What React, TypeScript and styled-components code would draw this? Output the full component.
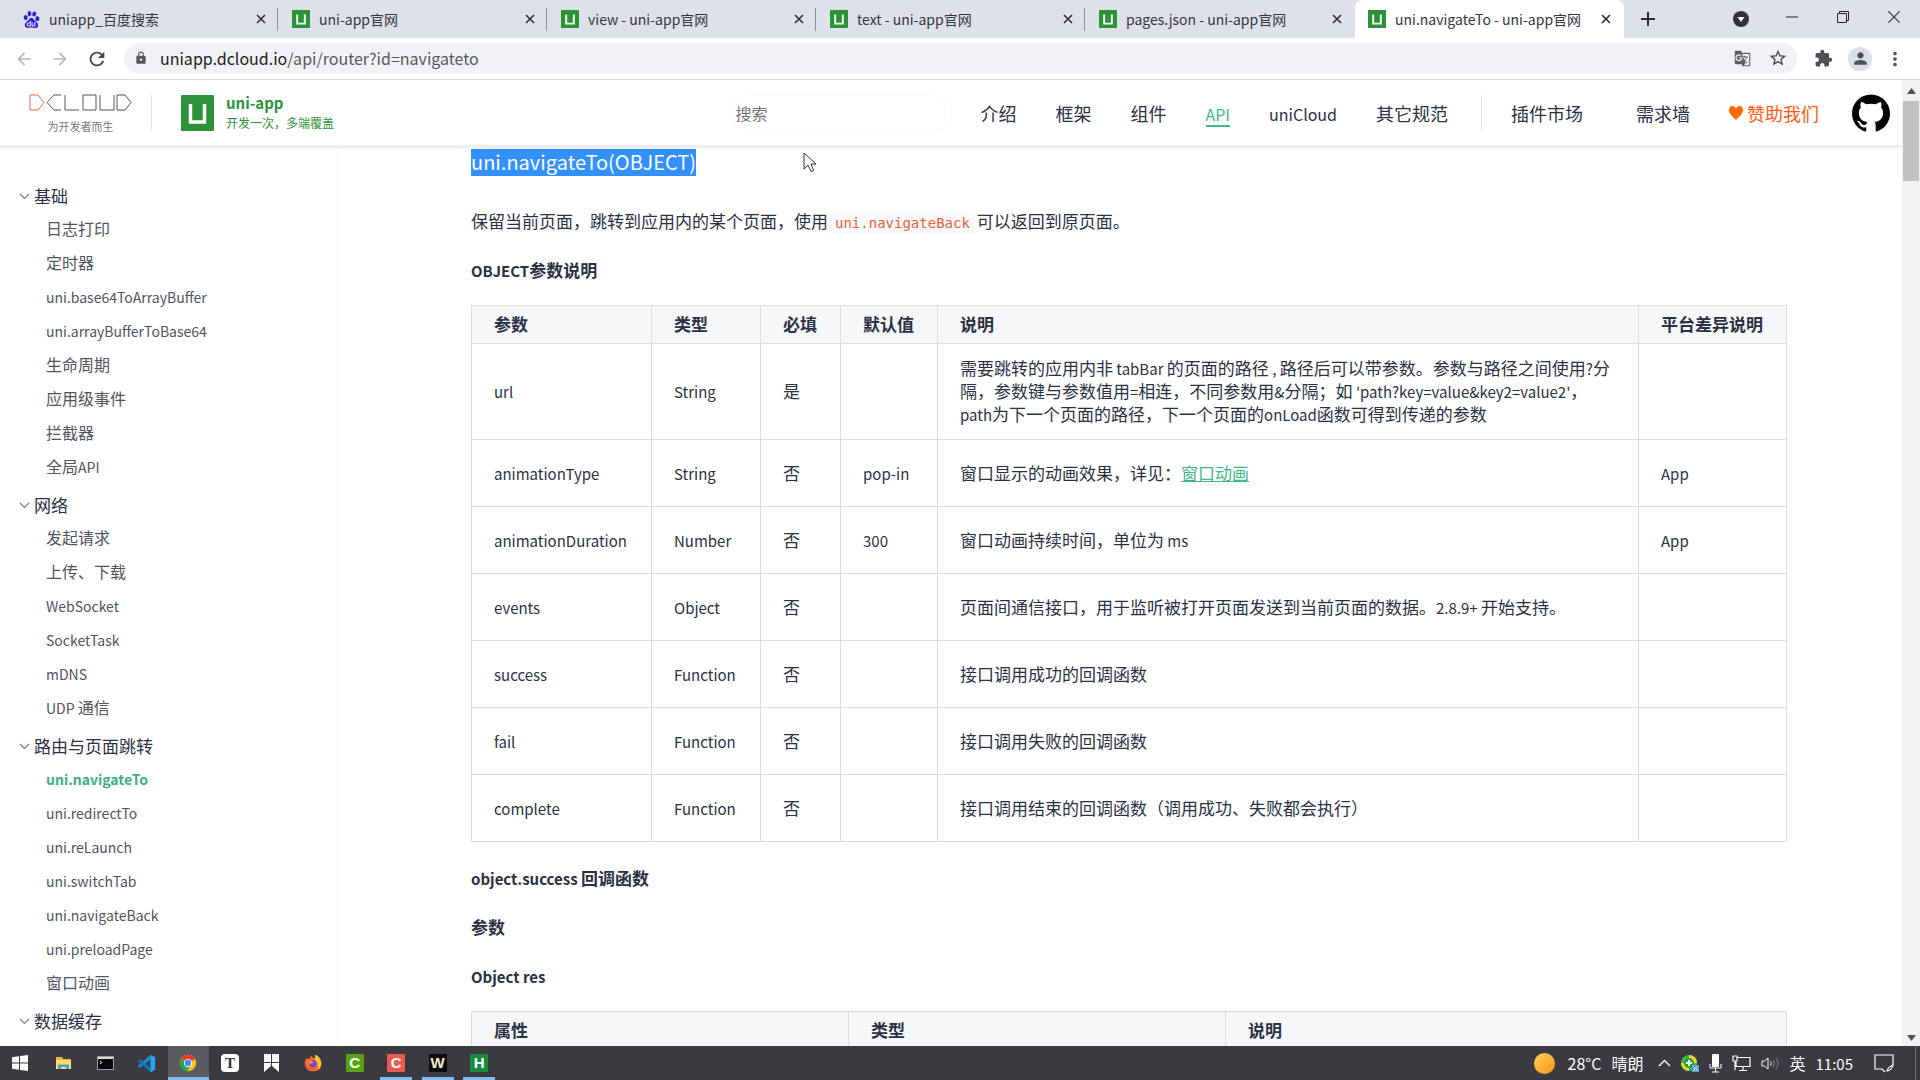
import React from "react";
import styled, { createGlobalStyle, css } from "styled-components";
import {
  MdArrowBack,
  MdArrowForward,
  MdExtension,
  MdGTranslate,
  MdLock,
  MdPerson,
  MdRefresh,
  MdStarBorder,
  MdMoreVert,
} from "react-icons/md";
import { SiBaidu } from "react-icons/si";

const ink = "#2a3145";
const green = "#42b983";
const brand = "#2b9237";
const line = "#dcdcde";
const sans = `"Noto Sans CJK SC", "Noto Sans", sans-serif`;

const Global = createGlobalStyle`
  *, *::before, *::after { box-sizing: border-box; }
  body { margin: 0; font-family: ${sans}; color: ${ink}; background: #fff; }
  button, input { font: inherit; color: inherit; border: 0; padding: 0; background: none; }
  a { color: inherit; text-decoration: none; }
  ul { list-style: none; margin: 0; padding: 0; }
  h2, h4, p { margin: 0; }
  svg { display: block; flex: none; }
`;

const Screen = styled.div`
  height: 100vh;
  display: flex;
  flex-direction: column;
  overflow: hidden;
`;

/* Latin runs are set a little smaller than the Chinese text around them. */
const Latin = styled.span<{ $size: number }>`
  font-size: ${(p) => p.$size}px;
  line-height: 1;
`;

const Mixed = ({ text, size = 15 }: { text: string; size?: number }) => (
  <>
    {text.split(/([ -~]+)/).map((run, i) => (i % 2 ? <Latin key={i} $size={size}>{run}</Latin> : run))}
  </>
);

/* ---------- browser chrome ---------- */

const TabStrip = styled.div`
  flex: none;
  height: 38px;
  padding-left: 10px;
  display: flex;
  background: #dee1e9;
`;

const TabItem = styled.div<{ $active?: boolean; $divided?: boolean }>`
  width: 269px;
  height: 38px;
  padding: 0 12px 0 13px;
  display: flex;
  align-items: center;
  gap: 9px;
  font-size: 14px;
  color: #33363c;
  border-right: 1px solid transparent;
  ${(p) =>
    p.$active &&
    css`
      background: #fff;
      border-radius: 8px 8px 0 0;
    `}
  ${(p) =>
    p.$divided &&
    css`
      background: linear-gradient(#8d9097, #8d9097) right center / 1px 23px no-repeat;
    `}
`;

const TabTitle = styled.span`
  flex: 1;
  min-width: 0;
  overflow: hidden;
  white-space: nowrap;
`;

const IconButton = styled.button<{ $w: number; $tone?: string }>`
  width: ${(p) => p.$w}px;
  align-self: stretch;
  display: flex;
  flex: none;
  align-items: center;
  justify-content: center;
  color: ${(p) => p.$tone || "#2b2d33"};
`;

const Spacer = styled.div`
  flex: 1;
`;

const WindowButtons = styled.div`
  display: flex;
  height: 34px;
`;

const AddressRow = styled.div`
  flex: none;
  height: 42px;
  padding: 0 9px 0 6px;
  display: flex;
  align-items: center;
  background: #fff;
  border-bottom: 1px solid #d7d9de;
`;

const AddressBar = styled.div`
  flex: 1;
  height: 31px;
  margin: 0 8px 0 9px;
  padding: 0 7px 1px 10px;
  display: flex;
  align-items: center;
  gap: 12px;
  border-radius: 16px;
  background: #f1f2f5;
  color: #55585e;
  font-size: 16px;
  white-space: nowrap;
`;

const Url = styled.span`
  flex: 1;
  b {
    font-weight: 400;
    color: #1c1d20;
  }
`;

const Avatar = styled.span`
  width: 24px;
  height: 24px;
  border-radius: 50%;
  display: grid;
  place-items: center;
  background: #dcdeeb;
`;

/* ---------- page header ---------- */

const Viewport = styled.div`
  flex: 1;
  min-height: 0;
  display: flex;
  position: relative;
`;

const Page = styled.div`
  flex: 1;
  min-width: 0;
  display: flex;
  flex-direction: column;
`;

const Header = styled.header`
  flex: none;
  height: 65px;
  padding: 0 12px 0 29px;
  display: flex;
  align-items: center;
  background: #fff;
  font-size: 18px;
  white-space: nowrap;
`;

const HeaderShade = styled.div`
  flex: none;
  height: 4px;
  background: linear-gradient(#ececee, #f3f3f4);
`;

const Company = styled.a`
  display: flex;
  flex-direction: column;
  align-items: center;
  gap: 7px;
  padding-top: 2px;
  font-size: 11px;
  line-height: 16px;
  color: #777;
`;

const Rule = styled.span<{ $before: number; $after: number }>`
  width: 1px;
  height: 36px;
  margin: 0 ${(p) => p.$after}px 0 ${(p) => p.$before}px;
  background: #e4e4e6;
`;

const Product = styled.a`
  display: flex;
  align-items: center;
  gap: 12px;
  color: ${brand};
`;

const ProductText = styled.span`
  display: flex;
  flex-direction: column;
  padding-bottom: 1px;
  font-size: 12px;
  line-height: 19px;
  b {
    font-size: 15px;
    line-height: 21px;
  }
`;

const SearchBox = styled.input`
  width: 222px;
  height: 35px;
  margin-right: 29px;
  padding: 0 5px;
  border: 1px solid #fafafa;
  border-radius: 18px;
  font-size: 16px;
  &::placeholder {
    color: #757575;
    opacity: 1;
  }
`;

const TopNav = styled.nav`
  display: flex;
  align-items: center;
`;

const NavLink = styled.a<{ $active?: boolean; $gap?: number }>`
  margin-right: ${(p) => p.$gap ?? 39}px;
  line-height: 24px;
  border-bottom: 2px solid ${(p) => (p.$active ? green : "transparent")};
  border-top: 2px solid transparent;
  color: ${(p) => (p.$active ? green : ink)};
`;

const Sponsor = styled.a`
  display: flex;
  align-items: center;
  gap: 4px;
  margin-right: 33px;
  color: #ff5a10;
`;

/* ---------- body ---------- */

const Body = styled.div`
  flex: 1;
  min-height: 0;
  display: flex;
  overflow: hidden;
`;

const Sidebar = styled.nav`
  flex: none;
  width: 338px;
  padding: 31px 20px 0 19px;
  border-right: 1px solid #f6f6f7;
  color: #50545e;
  font-size: 16px;
`;

const Group = styled.div`
  padding-bottom: 6px;
`;

const GroupTitle = styled.p`
  display: flex;
  align-items: center;
  gap: 4px;
  line-height: 31px;
  font-size: 17px;
  color: ${ink};
`;

const SideLink = styled.a<{ $active?: boolean }>`
  display: block;
  padding-left: 27px;
  line-height: 34px;
  font-weight: ${(p) => (p.$active ? 700 : 400)};
  color: ${(p) => (p.$active ? "#3fae7d" : "inherit")};
`;

const Article = styled.article`
  flex: 1;
  min-width: 0;
  padding: 0 115px 0 133px;
  font-size: 17px;
  line-height: 23px;
`;

const Title = styled.h2`
  display: flex;
  font-size: 20px;
  font-weight: 400;
  line-height: 25px;
  span {
    padding-bottom: 2px;
    background: #3390ff;
    color: #fff;
  }
`;

const Intro = styled.p`
  margin-top: 33px;
`;

const Code = styled.code`
  margin: 0 2px;
  padding: 3px 5px;
  border-radius: 2px;
  background: #f9f9f9;
  color: #e8603c;
  font: 14px "DejaVu Sans Mono", monospace;
`;

const SubTitle = styled.h4<{ $top: number }>`
  margin-top: ${(p) => p.$top}px;
  font-size: 17px;
  font-weight: 700;
  line-height: 23px;
`;

const DataTable = styled.table`
  width: 100%;
  margin-top: 24px;
  table-layout: fixed;
  border-collapse: collapse;
  text-align: left;
  th,
  td {
    border: 1px solid ${line};
    padding: 12px 22px 14px;
  }
  th {
    height: 38px;
    padding: 0 22px 2px;
    background: #f6f7f8;
    white-space: nowrap;
  }
  td {
    height: 67px;
  }
`;

const Column = styled.col<{ $w?: number }>`
  width: ${(p) => (p.$w ? `${p.$w}px` : "auto")};
`;

const TextLink = styled.a`
  color: ${green};
  text-decoration: underline;
`;

const ScrollBar = styled.div`
  flex: none;
  width: 18px;
  display: flex;
  flex-direction: column;
  align-items: center;
  justify-content: space-between;
  padding: 8px 0 5px;
  background: #f1f1f3;
`;

const Thumb = styled.span`
  width: 16px;
  height: 80px;
  margin: 7px 0 auto;
  background: #c1c1c4;
`;

const Pointer = styled.svg`
  position: absolute;
  left: 803px;
  top: 72px;
`;

/* ---------- task bar ---------- */

const TaskBar = styled.div`
  flex: none;
  height: 34px;
  padding: 0 4px 0 0;
  display: flex;
  align-items: center;
  background: #3a3a40;
  color: #fff;
  font-size: 16px;
  white-space: nowrap;
`;

const Apps = styled.div`
  width: 457px;
  margin-left: 3px;
  align-self: stretch;
  display: grid;
  grid-template-columns: repeat(11, 1fr);
`;

const AppButton = styled.button<{ $focused?: boolean; $running?: boolean }>`
  height: 34px;
  display: flex;
  align-items: center;
  justify-content: center;
  background: ${(p) => (p.$focused ? "#5a5b5f" : "none")};
  ${(p) =>
    (p.$running || p.$focused) &&
    css`
      background-image: linear-gradient(#80bdf0, #80bdf0);
      background-repeat: no-repeat;
      background-position: bottom center;
      background-size: ${p.$focused ? "100%" : "32px"} 3px;
    `}
`;

const Badge = styled.span<{ $bg: string; $fg?: string; $serif?: boolean; $round?: number }>`
  width: 18px;
  height: 18px;
  display: grid;
  place-items: center;
  border-radius: ${(p) => p.$round ?? 1}px;
  background: ${(p) => p.$bg};
  color: ${(p) => p.$fg || "#fff"};
  font: bold 15px/18px ${(p) => (p.$serif ? `"Liberation Serif", serif` : `"Liberation Sans", sans-serif`)};
`;

const Tray = styled.div`
  display: flex;
  align-items: center;
  gap: 10px;
`;

const Weather = styled.span`
  display: flex;
  align-items: center;
  gap: 10px;
  margin-right: 4px;
`;

const Sun = styled.span`
  width: 21px;
  height: 21px;
  margin-right: 3px;
  border-radius: 50%;
  background: linear-gradient(135deg, #ffd257, #f7931e);
`;

const Clock = styled.span`
  margin-right: 11px;
  font-size: 15px;
`;

const Edge = styled.span`
  width: 1px;
  height: 34px;
  margin-left: 11px;
  background: #6c6c70;
`;

/* ---------- drawings ---------- */

const UniLogo = ({ w, h }: { w: number; h: number }) => (
  <svg width={w} height={h} viewBox="0 0 33 36" preserveAspectRatio="none" aria-hidden="true">
    <rect width="33" height="36" rx="1" fill={brand} />
    <path d="M9.500 9v18h14V9" fill="none" stroke="#fff" strokeWidth="3.500" />
  </svg>
);

const Cross = ({ size, weight }: { size: number; weight: number }) => (
  <svg width={size} height={size} viewBox="0 0 10 10" aria-hidden="true">
    <path d="M1 1l8 8M9 1l-8 8" stroke="currentColor" strokeWidth={weight} />
  </svg>
);

const CompanyLogo = () => (
  <svg width="103" height="17" viewBox="0 0 103 17" fill="none" stroke="#555" role="img" aria-label="DCloud">
    <path d="M1 1h8l6 7.500-6 7.500h-8z" stroke="#e8694a" />
    <path d="M32 1h-7l-7 7.500 7 7.500h7M36 1v15h14M54 1h13v15H54zM71 1v15h14V1M88 1h8l6 7.500-6 7.500h-8z" />
  </svg>
);

const GithubMark = () => (
  <svg width="38" height="38" viewBox="0 0 24 24" fill="#000" aria-hidden="true">
    <path d="M12 .297c-6.63 0-12 5.373-12 12 0 5.303 3.438 9.8 8.205 11.385.6.113.82-.258.82-.577 0-.285-.01-1.04-.015-2.04-3.338.724-4.042-1.61-4.042-1.61C4.422 18.07 3.633 17.7 3.633 17.7c-1.087-.744.084-.729.084-.729 1.205.084 1.838 1.236 1.838 1.236 1.07 1.835 2.809 1.305 3.495.998.108-.776.417-1.305.76-1.605-2.665-.3-5.466-1.332-5.466-5.93 0-1.31.465-2.38 1.235-3.22-.135-.303-.54-1.523.105-3.176 0 0 1.005-.322 3.3 1.23.96-.267 1.98-.399 3-.405 1.02.006 2.04.138 3 .405 2.28-1.552 3.285-1.23 3.285-1.23.645 1.653.24 2.873.12 3.176.765.84 1.23 1.91 1.23 3.22 0 4.61-2.805 5.625-5.475 5.92.42.36.81 1.096.81 2.22 0 1.606-.015 2.896-.015 3.286 0 .315.21.69.825.57C20.565 22.092 24 17.592 24 12.297c0-6.627-5.373-12-12-12" />
  </svg>
);

const Chevron = () => (
  <svg width="11" height="11" viewBox="0 0 11 11" fill="none" stroke="#777b84" aria-hidden="true">
    <path d="M1 4l4.500 4.500L10 4" strokeWidth="1.200" />
  </svg>
);

const ScrollArrow = ({ down }: { down?: boolean }) => (
  <svg width="9" height="6" viewBox="0 0 9 6" fill="#505055" aria-hidden="true">
    <path d={down ? "M0 0h9L4.500 6z" : "M0 6h9L4.500 0z"} />
  </svg>
);

const WindowsIcon = () => (
  <svg width="16" height="16" viewBox="0 0 16 16" fill="#fff" aria-hidden="true">
    <path d="M0 2.300l7-1v6.200H0zM8 1.100L16 0v7.500H8zM0 8.500h7v6.200l-7-1zM8 8.500h8V16l-8-1.100z" />
  </svg>
);

const FolderIcon = () => (
  <svg width="17" height="16" viewBox="0 0 17 16" aria-hidden="true">
    <path d="M1 2h6l1 2h8v10H1z" fill="#eab93c" />
    <path d="M1 5h15v9H1z" fill="#fbdc6c" />
    <path d="M3 14V9.500h11V14h-3v-2H6v2z" fill="#4a9fd8" />
  </svg>
);

const TerminalIcon = () => (
  <svg width="17" height="14" viewBox="0 0 17 14" aria-hidden="true">
    <rect x=".5" y=".5" width="16" height="13" fill="#08080b" stroke="#9b9ba0" />
    <path d="M1 2h15" stroke="#d5d5d8" strokeWidth="2" />
    <path d="M3 5l2 1.500L3 8" fill="none" stroke="#ddd" />
  </svg>
);

const CodeIcon = () => (
  <svg width="19" height="19" viewBox="0 0 24 24" aria-hidden="true">
    <path d="M17 1v6L3.500 17.500l-2.500-2z" fill="#1c8fd6" />
    <path d="M17 23v-6L3.500 6.500L1 8.500z" fill="#1177b8" />
    <path d="M17 1l6 3v16l-6 3z" fill="#2ba6ee" />
  </svg>
);

const ChromeIcon = () => (
  <svg width="18" height="18" viewBox="0 0 24 24" aria-hidden="true">
    <circle cx="12" cy="12" r="11" fill="#fbc116" />
    <path d="M12 12L2.500 6.500A11 11 0 0 1 21.500 6.500z" fill="#e33b2e" />
    <path d="M12 12L2.500 6.500A11 11 0 0 0 11 23l5-9z" fill="#2da44e" />
    <circle cx="12" cy="12" r="5.500" fill="#fff" />
    <circle cx="12" cy="12" r="4.300" fill="#4086f4" />
  </svg>
);

const RibbonIcon = () => (
  <svg width="15" height="18" viewBox="0 0 15 18" fill="#fff" aria-hidden="true">
    <path d="M0 0h7v8H0zM8 0h7v8H8zM0 9h7v3l-7 6zM8 9h7v9l-7-6z" />
  </svg>
);

const FirefoxIcon = () => (
  <svg width="18" height="18" viewBox="0 0 24 24" aria-hidden="true">
    <path d="M12 23C5 23 1 18 1 12.500 1 9 2.500 6 4 4.500L5 7l3-1 1-4 4 4c4-1 1-5 1-5 5 1 9 6 9 11.500C23 18 19 23 12 23z" fill="#ff6a2a" />
    <path d="M14 1c5 1 9 6 9 11.500 0 4-2 7-5 9 2-6 1-11-5-14 3 0 2-4 1-6.500z" fill="#ffc42e" />
    <path d="M2 10c0 8 5 11 11 11-5 1-12-2-11-11z" fill="#e8285f" />
    <circle cx="12" cy="13" r="5" fill="#7a43d6" />
    <path d="M6 10c3-2 6 0 7 1-2 0-3 1-3 2-2 0-4-1-4-3z" fill="#ff9a2e" />
  </svg>
);

const CaretUp = () => (
  <svg width="13" height="8" viewBox="0 0 13 8" fill="none" stroke="#fff" aria-hidden="true">
    <path d="M1 7l5.500-5.500L12 7" strokeWidth="1.300" />
  </svg>
);

const ShieldIcon = () => (
  <svg width="18" height="17" viewBox="0 0 18 17" aria-hidden="true">
    <circle cx="8" cy="8" r="8" fill="#3fb54a" />
    <path d="M8 0a8 8 0 0 1 8 8H8z" fill="#f5d432" />
    <path d="M0 8a8 8 0 0 0 8 8V8z" fill="#d8dc3a" />
    <circle cx="8" cy="8" r="5" fill="#2c9a3c" />
    <path d="M8 5v6M5 8h6" stroke="#fff" strokeWidth="2" />
    <path d="M11 10h7v7h-7z" fill="#4b9be0" />
    <path d="M12 11l5 5M17 11l-5 5" stroke="#fff" />
  </svg>
);

const MicIcon = () => (
  <svg width="13" height="19" viewBox="0 0 13 19" aria-hidden="true">
    <rect x="3" y="0" width="7" height="13" rx="1" fill="#fff" />
    <path d="M1 10v4h11v-4M6.500 14v4M3 18h7" fill="none" stroke="#fff" />
  </svg>
);

const NetworkIcon = () => (
  <svg width="19" height="17" viewBox="0 0 19 17" fill="none" stroke="#fff" aria-hidden="true">
    <path d="M5 2.500h13v9H4V7M11 11.500v4M7 15.500h8M1 1h4v5H1zM3 6v9" strokeWidth="1.200" />
  </svg>
);

const VolumeIcon = () => (
  <svg width="19" height="15" viewBox="0 0 19 15" fill="none" stroke="#fff" aria-hidden="true">
    <path d="M1 5h2.500L7 2v11L3.500 10H1z" />
    <path d="M9.500 5.500q1.500 2 0 4" />
    <path d="M12 4q3 3.500 0 7M15 2q4 5.500 0 11" stroke="#8b8b90" />
  </svg>
);

const NoticeIcon = () => (
  <svg width="20" height="19" viewBox="0 0 20 19" fill="none" stroke="#fff" aria-hidden="true">
    <path d="M19 11V1H1v14h7l3 3M19 11q-1 5-6 6 1-4 6-6z" strokeWidth="1.200" />
  </svg>
);

/* ---------- content ---------- */

const tabs = [
  "uniapp_百度搜索",
  "uni-app官网",
  "view - uni-app官网",
  "text - uni-app官网",
  "pages.json - uni-app官网",
  "uni.navigateTo - uni-app官网",
];

const groups = [
  {
    title: "基础",
    items: ["日志打印", "定时器", "uni.base64ToArrayBuffer", "uni.arrayBufferToBase64", "生命周期", "应用级事件", "拦截器", "全局API"],
  },
  { title: "网络", items: ["发起请求", "上传、下载", "WebSocket", "SocketTask", "mDNS", "UDP 通信"] },
  {
    title: "路由与页面跳转",
    items: ["uni.navigateTo", "uni.redirectTo", "uni.reLaunch", "uni.switchTab", "uni.navigateBack", "uni.preloadPage", "窗口动画"],
  },
  { title: "数据缓存", items: [] as string[] },
];

const params: React.ReactNode[][] = [
  [
    "url",
    "String",
    "是",
    "",
    "需要跳转的应用内非 tabBar 的页面的路径 , 路径后可以带参数。参数与路径之间使用?分隔，参数键与参数值用=相连，不同参数用&分隔；如 'path?key=value&key2=value2'，path为下一个页面的路径，下一个页面的onLoad函数可得到传递的参数",
    "",
  ],
  ["animationType", "String", "否", "pop-in", <>窗口显示的动画效果，详见：<TextLink href="#animation">窗口动画</TextLink></>, "App"],
  ["animationDuration", "Number", "否", "300", "窗口动画持续时间，单位为 ms", "App"],
  ["events", "Object", "否", "", "页面间通信接口，用于监听被打开页面发送到当前页面的数据。2.8.9+ 开始支持。", ""],
  ["success", "Function", "否", "", "接口调用成功的回调函数", ""],
  ["fail", "Function", "否", "", "接口调用失败的回调函数", ""],
  ["complete", "Function", "否", "", "接口调用结束的回调函数（调用成功、失败都会执行）", ""],
];

const taskApps: { name: string; icon: React.ReactNode; focused?: boolean; running?: boolean }[] = [
  { name: "Explorer", icon: <FolderIcon /> },
  { name: "Terminal", icon: <TerminalIcon /> },
  { name: "Code", icon: <CodeIcon /> },
  { name: "Chrome", icon: <ChromeIcon />, focused: true },
  { name: "Typora", icon: <Badge $bg="#fff" $fg="#333" $serif $round={4}>T</Badge> },
  { name: "Bookmarks", icon: <RibbonIcon /> },
  { name: "Firefox", icon: <FirefoxIcon /> },
  { name: "Camtasia", icon: <Badge $bg="#56a414">C</Badge> },
  { name: "Recorder", icon: <Badge $bg="#ee5a50">C</Badge>, running: true },
  { name: "WonderPen", icon: <Badge $bg="#0b0b0b" $fg="#f3edd0">W</Badge>, running: true },
  { name: "HBuilderX", icon: <Badge $bg="#168a3f">H</Badge>, running: true },
];

export default function App() {
  return (
    <Screen>
      <Global />
      <TabStrip>
        {tabs.map((title, i) => (
          <TabItem key={title} $active={i === 5} $divided={i < 4}>
            {i === 0 ? <SiBaidu size={17} color="#2a20d8" /> : <UniLogo w={18} h={18} />}
            <TabTitle>{title}</TabTitle>
            <IconButton $w={10} aria-label="关闭标签页">
              <Cross size={10} weight={1.6} />
            </IconButton>
          </TabItem>
        ))}
        <IconButton $w={48} aria-label="新标签页">
          <svg width="14" height="14" viewBox="0 0 14 14" stroke="currentColor" strokeWidth="2" aria-hidden="true">
            <path d="M7 0v14M0 7h14" />
          </svg>
        </IconButton>
        <Spacer />
        <IconButton $w={50} aria-label="搜索标签页">
          <svg width="16" height="16" viewBox="0 0 16 16" aria-hidden="true">
            <circle cx="8" cy="8" r="8" fill="#303238" />
            <path d="M4.500 6h7L8 11z" fill="#fff" />
          </svg>
        </IconButton>
        <WindowButtons>
          <IconButton $w={51} aria-label="最小化">
            <svg width="12" height="2" aria-hidden="true"><path d="M0 1h12" stroke="#222" /></svg>
          </IconButton>
          <IconButton $w={51} aria-label="还原">
            <svg width="12" height="12" viewBox="0 0 12 12" fill="none" stroke="#222" aria-hidden="true">
              <path d="M.5 2.500h9v9h-9zM2.500 2.500v-2h9v9h-2" />
            </svg>
          </IconButton>
          <IconButton $w={52} aria-label="关闭">
            <Cross size={14} weight={0.8} />
          </IconButton>
        </WindowButtons>
      </TabStrip>

      <AddressRow>
        <IconButton $w={36} $tone="#b5b7bb" aria-label="后退"><MdArrowBack size={20} /></IconButton>
        <IconButton $w={36} $tone="#b5b7bb" aria-label="前进"><MdArrowForward size={20} /></IconButton>
        <IconButton $w={37} $tone="#44474d" aria-label="刷新"><MdRefresh size={22} /></IconButton>
        <AddressBar>
          <MdLock size={14} />
          <Url><b>uniapp.dcloud.io</b>/api/router?id=navigateto</Url>
          <IconButton $w={24} $tone="#5b5e64" aria-label="翻译"><MdGTranslate size={17} /></IconButton>
          <IconButton $w={24} $tone="#44474d" aria-label="收藏"><MdStarBorder size={20} /></IconButton>
        </AddressBar>
        <IconButton $w={36} $tone="#4d5056" aria-label="扩展程序"><MdExtension size={19} /></IconButton>
        <IconButton $w={38} $tone="#4d5056" aria-label="用户"><Avatar><MdPerson size={19} /></Avatar></IconButton>
        <IconButton $w={32} $tone="#4d5056" aria-label="菜单"><MdMoreVert size={22} /></IconButton>
      </AddressRow>

      <Viewport>
        <Page>
          <Header>
            <Company href="#dcloud">
              <CompanyLogo />
              为开发者而生
            </Company>
            <Rule $before={19} $after={29} />
            <Product href="#uni-app">
              <UniLogo w={33} h={36} />
              <ProductText>
                <b>uni-app</b>
                开发一次，多端覆盖
              </ProductText>
            </Product>
            <Spacer />
            <SearchBox type="search" placeholder="搜索" aria-label="搜索" />
            <TopNav>
              <NavLink href="#intro">介绍</NavLink>
              <NavLink href="#framework">框架</NavLink>
              <NavLink href="#components">组件</NavLink>
              <NavLink href="#api" $active><Mixed text="API" size={16} /></NavLink>
              <NavLink href="#unicloud"><Mixed text="uniCloud" size={16} /></NavLink>
              <NavLink href="#spec" $gap={0}>其它规范</NavLink>
              <Rule $before={33} $after={29} />
              <NavLink href="#plugins" $gap={53}>插件市场</NavLink>
              <NavLink href="#wishes">需求墙</NavLink>
              <Sponsor href="#sponsor">
                <svg width="14" height="14" viewBox="0 0 14 14" fill="#ff6a00" aria-hidden="true">
                  <path d="M7 14C3 10 0 7.500 0 4 0 1.500 1.500 0 3.500 0 5 0 6.300 1 7 2.500 7.700 1 9 0 10.500 0 12.500 0 14 1.500 14 4c0 3.500-3 6-7 10z" />
                </svg>
                赞助我们
              </Sponsor>
              <a href="#github" aria-label="GitHub"><GithubMark /></a>
            </TopNav>
          </Header>
          <HeaderShade />
          <Body>
            <Sidebar>
              {groups.map((g) => (
                <Group key={g.title}>
                  <GroupTitle><Chevron />{g.title}</GroupTitle>
                  <ul>
                    {g.items.map((item) => (
                      <li key={item}>
                        <SideLink href={`#${item}`} $active={item === "uni.navigateTo"}>
                          <Mixed text={item} size={14} />
                        </SideLink>
                      </li>
                    ))}
                  </ul>
                </Group>
              ))}
            </Sidebar>
            <Article>
              <Title><span>uni.navigateTo(OBJECT)</span></Title>
              <Intro>
                保留当前页面，跳转到应用内的某个页面，使用<Code>uni.navigateBack</Code>可以返回到原页面。
              </Intro>
              <SubTitle $top={26}><Mixed text="OBJECT参数说明" /></SubTitle>
              <DataTable>
                <colgroup>
                  <Column $w={180} />
                  <Column $w={109} />
                  <Column $w={80} />
                  <Column $w={97} />
                  <Column />
                  <Column $w={148} />
                </colgroup>
                <thead>
                  <tr>
                    {["参数", "类型", "必填", "默认值", "说明", "平台差异说明"].map((h) => <th key={h} scope="col">{h}</th>)}
                  </tr>
                </thead>
                <tbody>
                  {params.map((row) => (
                    <tr key={String(row[0])}>
                      {row.map((cell, i) => (
                        <td key={i}>{typeof cell === "string" ? <Mixed text={cell} /> : cell}</td>
                      ))}
                    </tr>
                  ))}
                </tbody>
              </DataTable>
              <SubTitle $top={24}><Mixed text="object.success 回调函数" /></SubTitle>
              <SubTitle $top={26}>参数</SubTitle>
              <SubTitle $top={26}><Mixed text="Object res" /></SubTitle>
              <DataTable>
                <colgroup>
                  <Column $w={377} />
                  <Column $w={377} />
                  <Column />
                </colgroup>
                <thead>
                  <tr>
                    {["属性", "类型", "说明"].map((h) => <th key={h} scope="col">{h}</th>)}
                  </tr>
                </thead>
              </DataTable>
            </Article>
          </Body>
        </Page>
        <ScrollBar>
          <ScrollArrow />
          <Thumb />
          <ScrollArrow down />
        </ScrollBar>
        <Pointer width="14" height="21" viewBox="0 0 14 21" fill="#fff" stroke="#333" aria-hidden="true">
          <path d="M1 1v16l4-4 3 6.500 2.500-1L8 12h5z" />
        </Pointer>
      </Viewport>

      <TaskBar>
        <IconButton $w={40} aria-label="开始"><WindowsIcon /></IconButton>
        <Apps>
          {taskApps.map((a) => (
            <AppButton key={a.name} aria-label={a.name} $focused={a.focused} $running={a.running}>{a.icon}</AppButton>
          ))}
        </Apps>
        <Spacer />
        <Tray>
          <Weather><Sun /><span>28°C</span><span>晴朗</span></Weather>
          <CaretUp />
          <ShieldIcon />
          <MicIcon />
          <NetworkIcon />
          <VolumeIcon />
          <span>英</span>
          <Clock>11:05</Clock>
          <NoticeIcon />
          <Edge />
        </Tray>
      </TaskBar>
    </Screen>
  );
}
